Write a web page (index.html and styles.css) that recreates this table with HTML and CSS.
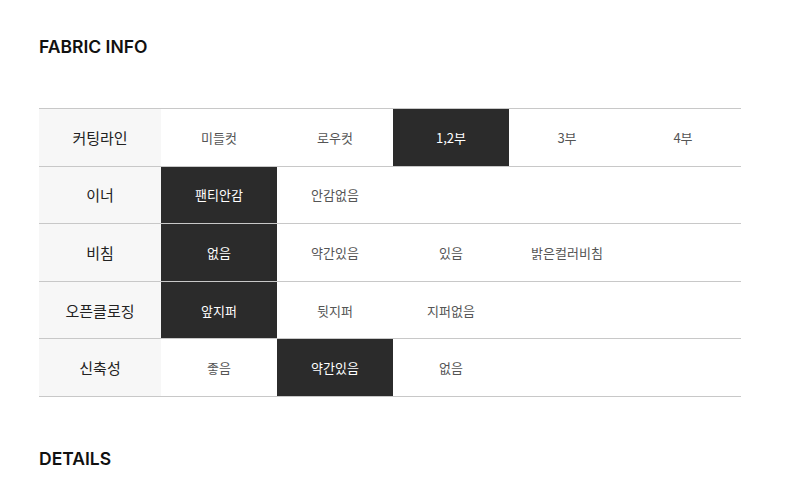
FILE: index.html
```html
<!DOCTYPE html>
<html lang="ko">
<head>
<meta charset="utf-8">
<link rel="stylesheet" href="styles.css">
</head>
<body>
<section class="wrap">
  <h2 class="title">FABRIC INFO</h2>
  <div class="table">
    <div class="row">
      <div class="head">커팅라인</div>
      <div class="cell">미들컷</div>
      <div class="cell">로우컷</div>
      <div class="cell on">1,2부</div>
      <div class="cell">3부</div>
      <div class="cell">4부</div>
    </div>
    <div class="row">
      <div class="head">이너</div>
      <div class="cell on">팬티안감</div>
      <div class="cell">안감없음</div>
      <div class="cell"></div>
      <div class="cell"></div>
      <div class="cell"></div>
    </div>
    <div class="row">
      <div class="head">비침</div>
      <div class="cell on">없음</div>
      <div class="cell">약간있음</div>
      <div class="cell">있음</div>
      <div class="cell">밝은컬러비침</div>
      <div class="cell"></div>
    </div>
    <div class="row">
      <div class="head">오픈클로징</div>
      <div class="cell on">앞지퍼</div>
      <div class="cell">뒷지퍼</div>
      <div class="cell">지퍼없음</div>
      <div class="cell"></div>
      <div class="cell"></div>
    </div>
    <div class="row">
      <div class="head">신축성</div>
      <div class="cell">좋음</div>
      <div class="cell on">약간있음</div>
      <div class="cell">없음</div>
      <div class="cell"></div>
      <div class="cell"></div>
    </div>
  </div>
  <h2 class="title details">DETAILS</h2>
</section>
</body>
</html>
```

FILE: styles.css
```css
html, body {
  margin: 0;
  padding: 0;
  background: #ffffff;
}
body {
  font-family: "Noto Sans CJK KR", "Noto Sans", sans-serif;
  color: #222;
}
.wrap {
  padding: 37px 0 0 39px;
}
.title {
  margin: 0;
  font-family: Inter, "Noto Sans", sans-serif;
  font-weight: 600;
  font-size: 17.5px;
  line-height: 20px;
  color: #111;
  letter-spacing: 0;
}
.table {
  margin-top: 51px;
  width: 702px;
  border-top: 1px solid #c8c8c8;
}
.row {
  display: grid;
  grid-template-columns: 122px repeat(5, 116px);
  height: 56.6px;
  border-bottom: 1px solid #c8c8c8;
}
.head, .cell {
  display: flex;
  align-items: center;
  justify-content: center;
}
.head {
  background: #f7f7f7;
  font-size: 15px;
  font-weight: 400;
  color: #222;
}
.cell {
  font-size: 13px;
  font-weight: 400;
  color: #555;
}
.cell.on {
  background: #2b2b2b;
  color: #fff;
}
.details {
  margin-top: 52px;
}
```
